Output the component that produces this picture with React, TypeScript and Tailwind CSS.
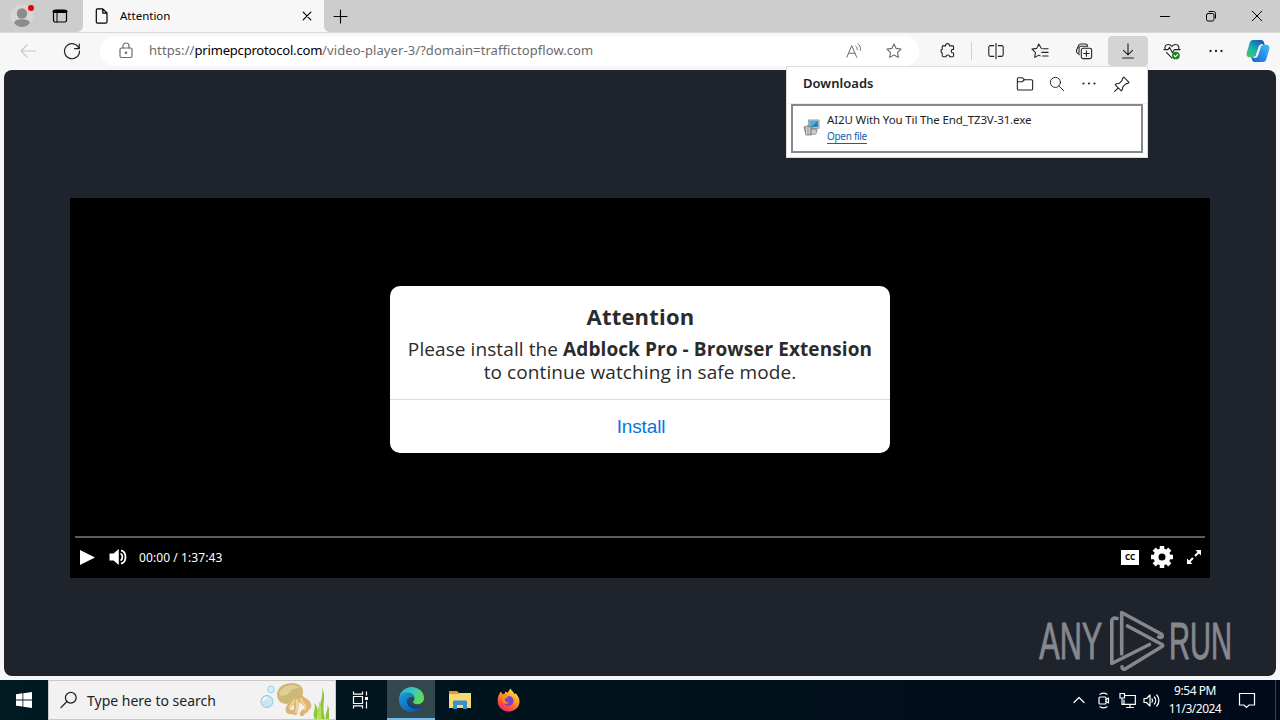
import React from 'react';

type IconProps = {
  children: React.ReactNode;
  box?: number;
  size?: number;
  className?: string;
};

function Icon({ children, box = 20, size = 20, className = '' }: IconProps) {
  return (
    <svg
      width={size}
      height={size}
      viewBox={`0 0 ${box} ${box}`}
      fill="none"
      stroke="currentColor"
      strokeWidth="1.2"
      strokeLinecap="round"
      strokeLinejoin="round"
      className={`shrink-0 ${className}`}
    >
      {children}
    </svg>
  );
}

const STAR = 'M10 2.2l2.4 4.9 5.4.8-3.9 3.8.9 5.4-4.8-2.6-4.8 2.6.9-5.4-3.9-3.8 5.4-.8z';

function TabBar() {
  return (
    <header className="flex h-8 shrink-0 bg-[#f7f7f7] text-black">
      <div className="flex w-[83px] items-center rounded-br-md bg-[#cdcdcd]">
        <div className="flex w-11 justify-center">
          <svg width="24" height="24" viewBox="0 0 24 24">
            <circle cx="12" cy="12" r="11.5" fill="#d8d6d4" />
            <circle cx="12" cy="9.5" r="5.2" fill="#8e8c8a" />
            <path d="M4 19c1-3.3 4.200-3.800 8-3.800s7 .5 8 3.800c-2 2.600-4.700 3.900-8 3.900S6 21.600 4 19z" fill="#8e8c8a" />
            <circle cx="21" cy="4" r="3" fill="#e3000f" />
          </svg>
        </div>
        <div className="flex w-8 justify-center">
          <Icon size={16} box={16}>
            <rect x="1.500" y="2" width="13" height="12" rx="1.800" />
            <path d="M2 3.600h12" strokeWidth="3" />
            <path d="M5 5v9" strokeWidth="1" />
          </Icon>
        </div>
      </div>
      <div className="flex w-[241px] items-center pl-[11px]">
        <Icon size={16} box={16}>
          <path d="M3.500.8h5.300l4.200 4.200v9c0 .8-.5 1.200-1.200 1.200H3.500c-.8 0-1.200-.5-1.200-1.200V2c0-.8.500-1.200 1.200-1.200zM8.800 1v4.100H13" />
        </Icon>
        <span className="ml-2.5 w-[182px] text-[11.5px]">Attention</span>
        <Icon size={10} box={10}>
          <path d="M1.200 1.200l7.600 7.600M8.800 1.200l-7.600 7.600" />
        </Icon>
      </div>
      <div className="flex flex-1 items-center rounded-bl-md bg-[#cdcdcd] pl-[9px]">
        <Icon size={15} box={15}>
          <path d="M7.500 1v13M1 7.500h13" strokeWidth="1.100" />
        </Icon>
        <div className="ml-auto flex">
          <div className="flex w-[46px] justify-center">
            <Icon size={12} box={12}><path d="M1.500 6.500h9" strokeWidth="1" /></Icon>
          </div>
          <div className="flex w-[46px] justify-center">
            <Icon size={12} box={12}>
              <rect x="1.500" y="3.500" width="7.500" height="7.500" rx="1.500" strokeWidth="1" />
              <path d="M4 1.500h4.500c1.300 0 2 .7 2 2V8" strokeWidth="1" />
            </Icon>
          </div>
          <div className="flex w-[46px] justify-center">
            <Icon size={12} box={12}><path d="M1.200 1.200l9.600 9.600M10.800 1.200l-9.600 9.600" strokeWidth="1" /></Icon>
          </div>
        </div>
      </div>
    </header>
  );
}

function Toolbar() {
  return (
    <div className="flex h-[38px] shrink-0 items-center border-t border-[#d8d8d8] bg-[#f7f7f7] pb-px pl-1.5 text-[#222]">
      <div className="flex w-11 justify-center text-[#c8c8c8]">
        <Icon><path d="M17.500 10H3M9 4l-6 6 6 6" /></Icon>
      </div>
      <div className="flex w-11 justify-center">
        <Icon>
          <path d="M17 7.500A7.500 7.500 0 1 0 17.500 10M17.300 3v4.700h-4.700" />
        </Icon>
      </div>
      <div className="ml-1.5 flex h-[30px] w-[819px] items-center rounded-full bg-white pl-4 text-[#6b6b6b]">
        <Icon>
          <rect x="4" y="7" width="12" height="9.500" rx="1.500" />
          <path d="M7 7V5c0-1.800 1.200-3 3-3s3 1.200 3 3v2" />
          <circle cx="10" cy="11.800" r=".7" fill="currentColor" />
        </Icon>
        <span className="ml-[13px] w-[696px] whitespace-nowrap text-[13px] tracking-[0.09px]">
          https://<span className="tracking-[-0.19px] text-black">primepcprotocol.com</span>/video-player-3/?domain=traffictopflow.com
        </span>
        <Icon size={18}>
          <path d="M2 17L7.500 4 13 17M4 12.500h7M12 4.500c1.300 1 1.800 2.500 1.500 4M14.500 2c2.300 1.800 3.200 4.500 2.500 7.300" strokeWidth="1.100" />
        </Icon>
        <Icon size={18} className="ml-[22px]"><path d={STAR} /></Icon>
      </div>
      <div className="ml-2.5 flex w-[38px] justify-center">
        <Icon size={18}>
          <path d="M7.300 4.300V4a2.200 2.200 0 0 1 4.400 0v.3h3.600c.5 0 .9.400.9.900v3h-.6a2 2 0 0 0 0 4h.6v3.200c0 .6-.4 1-.9 1h-3.500a2 2 0 0 0-4 0H4.600c-.6 0-1-.4-1-1v-3.200a2.100 2.100 0 0 1 0-4V5.200c0-.5.400-.9.900-.9z" />
        </Icon>
      </div>
      <div className="mx-1 h-[18px] w-px bg-[#d0d0d0]" />
      <div className="flex w-10 justify-center">
        <Icon size={18}>
          <path d="M10 1.500v17M7.500 4H3.800C2.700 4 2 4.700 2 5.800v8.400c0 1.100.7 1.800 1.800 1.800h3.700M12.500 4h3.700c1.100 0 1.800.7 1.800 1.800v8.400c0 1.100-.7 1.800-1.800 1.800h-3.700" />
        </Icon>
      </div>
      <div className="ml-0.5 flex w-11 justify-center">
        <Icon size={18}>
          <path d="M11.500 7.300L8.600 2.200 6.400 7.100l-5.300.8L5 11.700l-.9 5.400 4.700-2.500 1.500.8M13 7.500h6M12 11.500h7M13 15.500h6" />
        </Icon>
      </div>
      <div className="flex w-11 justify-center">
        <Icon size={18}>
          <rect x="7" y="7" width="11.500" height="11.500" rx="2" />
          <path d="M12.700 9.800v6M9.700 12.800h6M4.800 14l-2.500-2.200C1.500 11 1.400 10 1.800 9l2-4.800c.5-1.300 1.500-1.900 2.800-1.900h5c1.300 0 2.100.8 2.400 2M4.500 12V6.800c0-1.200.8-2 2-2H14" />
        </Icon>
      </div>
      <div className="ml-0.5 flex h-[30px] w-10 items-center justify-center rounded bg-[#d4d4d4]">
        <Icon size={18}><path d="M10 2v12M5 9.300l5 5 5-5M4 17.800h12" /></Icon>
      </div>
      <div className="ml-0.5 flex w-11 justify-center">
        <Icon size={18}>
          <path d="M2.500 8.500C1.300 5 3 2.700 5.700 2.700c1.700 0 3.200.9 4.100 2.400.9-1.500 2.400-2.400 4.200-2.400 2.700 0 4.500 2.500 3.400 5.600M1 8.500h4.500L7.300 6l3.200 6 2-3.500H19M3.800 11.500L10 17.800" />
          <circle cx="14.300" cy="15" r="4.300" fill="#198319" stroke="none" />
          <path d="M12.400 15l1.400 1.400 2.500-2.700" stroke="#fff" />
        </Icon>
      </div>
      <div className="flex w-11 justify-center">
        <Icon size={16} box={16}>
          <path d="M2.500 8h0M8 8h0M13.500 8h0" strokeWidth="2.300" />
        </Icon>
      </div>
      <div className="flex w-10 justify-center">
        <svg width="24" height="24" viewBox="0 0 24 24">
          <defs>
            <linearGradient id="cpA" x1="0" y1="1" x2=".8" y2="0">
              <stop offset="0" stopColor="#54c85b" />
              <stop offset=".45" stopColor="#1cb3ad" />
              <stop offset="1" stopColor="#1358bd" />
            </linearGradient>
            <linearGradient id="cpB" x1="1" y1="0" x2="0" y2="1">
              <stop offset="0" stopColor="#42c1f8" />
              <stop offset="1" stopColor="#175bd6" />
            </linearGradient>
          </defs>
          <path d="M7 1h8c2 0 2.600 1 3.100 2.700l.7 2.300h-2.500c-1.800 0-2.800.9-3.300 2.500l-2.600 8c-.4 1.200-1 1.800-2.200 1.800H4c-3 0-4-2-3.200-4.800l2.600-8.800C4.100 2.200 5 1 7 1z" fill="url(#cpA)" />
          <path d="M17 23H9c-2 0-2.600-1-3.100-2.700L5.200 18h2.500c1.800 0 2.800-.9 3.300-2.500l2.600-8c.4-1.200 1-1.800 2.200-1.800H20c3 0 4 2 3.200 4.800l-2.600 8.800C19.900 21.800 19 23 17 23z" fill="url(#cpB)" />
          <path d="M10.300 16.500l3-9.300c.4-1 1-1.400 2-1.400h1.500c-1.300 0-2 .6-2.400 1.800l-2.900 9.100c-.4 1.200-1.200 1.600-2.400 1.600H7.500c1.500 0 2.400-.6 2.800-1.800z" fill="#f7f7f7" stroke="#f7f7f7" strokeWidth="1" />
        </svg>
      </div>
    </div>
  );
}

function Downloads() {
  return (
    <div className="absolute left-[786px] top-[66px] flex h-[92px] w-[362px] flex-col border border-[#dedede] bg-white text-[#222]">
      <div className="flex h-[37px] shrink-0 items-center border-b border-[#eee] pb-[3px] pl-4">
        <span className="w-[206px] text-[13px] font-semibold tracking-[0.03px]">Downloads</span>
        <div className="flex w-8 justify-center">
          <Icon size={18}>
            <path d="M1.500 7.500V4.600c0-.9.600-1.500 1.500-1.500h4L9.500 5.300H17c.9 0 1.500.6 1.500 1.500v8.400c0 .9-.6 1.500-1.500 1.500H3c-.9 0-1.500-.6-1.500-1.500V7.500h5.300l2.700-2.200" />
          </Icon>
        </div>
        <div className="flex w-8 justify-center">
          <Icon size={16}>
            <circle cx="8" cy="8" r="6.300" /><path d="M12.700 12.700l5.800 5.800" />
          </Icon>
        </div>
        <div className="flex w-8 justify-center">
          <Icon size={16} box={16}><path d="M2.500 7.500h0M8 7.500h0M13.500 7.500h0" strokeWidth="2.200" /></Icon>
        </div>
        <div className="flex w-[34px] justify-center">
          <Icon size={18}>
            <path d="M12 2.300l5.800 5.800-1.200 1.200-2.700.8-3 3-.5 3.200-1.200 1.300-6.700-6.700 1.300-1.200 3.200-.5 3-3L10.800 3.500zM5.800 14.200L1.800 18.200" />
          </Icon>
        </div>
      </div>
      <div className="mx-1 flex h-[49px] items-center border-2 border-[#888] pb-0.5 pl-2.5">
        <svg width="17" height="17" viewBox="0 0 18 18" className="shrink-0">
          <rect x="6" y="1" width="11" height="9" fill="#b5c3cc" stroke="#6b7d8a" strokeWidth=".6" />
          <rect x="7.300" y="2.300" width="8.400" height="6" fill="#147cc4" />
          <path d="M7.300 2.300h8.400L9 8.300H7.300z" fill="#4fb0e6" />
          <path d="M8 10h6l2 2.500H8z" fill="#8a9197" />
          <path d="M1 8.500l4-1.500 5 1-1 9H3z" fill="#9ba39b" stroke="#5f665f" strokeWidth=".6" />
          <path d="M4 8v8.500M6.500 9v7" stroke="#e6eae4" />
          <circle cx="11.500" cy="13.500" r="3" fill="#c9cdd0" stroke="#777" strokeWidth=".6" />
        </svg>
        <div className="ml-[7px] flex flex-col items-start">
          <span className="whitespace-nowrap text-[11.5px] leading-[15px] tracking-[-0.13px]">AI2U With You Til The End_TZ3V-31.exe</span>
          <span className="mt-[3px] border-b border-[#0f62ad] text-[10px] leading-[13px] tracking-[-0.3px] text-[#0f62ad]">Open file</span>
        </div>
      </div>
    </div>
  );
}

function InstallDialog() {
  return (
    <div className="mt-[88px] flex h-[167px] w-[500px] flex-col rounded-[10px] bg-white text-center font-['Open_Sans',sans-serif] text-[#2b2b2b]">
      <div className="flex h-[114px] flex-col border-b border-[#dcdcdc] pt-4">
        <h1 className="pl-px text-[22px] font-bold leading-7 tracking-[0.2px]">Attention</h1>
        <p className="mt-2 whitespace-nowrap text-[19px] leading-[23px] tracking-[0.09px]">
          Please install the <b>Adblock Pro - Browser Extension</b>
          <br />
          to continue watching in safe mode.
        </p>
      </div>
      <button className="flex-1 pl-0.5 pt-px font-['Liberation_Sans',sans-serif] text-[19px] tracking-[-0.15px] text-[#0a74e0]">Install</button>
    </div>
  );
}

function Player() {
  return (
    <div className="mt-32 flex h-[380px] w-[1140px] flex-col items-center bg-black text-white">
      <InstallDialog />
      <div className="mt-auto h-0.5 w-[1130px] bg-[#5c5c5c]" />
      <div className="flex h-10 w-full items-center pb-0.5 pl-2.5 pr-2">
        <svg width="15" height="15" viewBox="0 0 15 15" fill="#fff"><path d="M0 0l15 7.500L0 15z" /></svg>
        <svg width="19" height="16" viewBox="0 0 18 16" className="ml-3.5">
          <path d="M0 4.500h4L9.300 0v16L4 11.500H0z" fill="#fff" />
          <path d="M11 4.500c2.500 1 2.500 6 0 7M11.500 1.300c6 1.500 6 12 0 13.400" fill="none" stroke="#fff" strokeWidth="1.800" />
        </svg>
        <span className="ml-[11px] pt-px text-[12px] tracking-[0.08px]">00:00 / 1:37:43</span>
        <span className="ml-auto flex h-[15px] w-[18px] items-center justify-center bg-white text-[8px] font-bold leading-none text-black">CC</span>
        <svg width="22" height="22" viewBox="0 0 22 22" className="ml-3">
          <g fill="none" stroke="#fff">
            <circle cx="11" cy="11" r="6" strokeWidth="5" />
            <path d="M11 0v4M11 18v4M0 11h4M18 11h4M3.200 3.200L6 6M16 16l2.800 2.800M3.200 18.800L6 16M16 6l2.800-2.800" strokeWidth="4.500" />
          </g>
        </svg>
        <svg width="16" height="16" viewBox="0 0 16 16" fill="#fff" className="ml-[13px]">
          <path d="M9.500 1H15v5.500zM1 9.500V15h5.500z" />
          <path d="M9 7l4-4M7 9l-4 4" stroke="#fff" strokeWidth="2" />
        </svg>
      </div>
    </div>
  );
}

function Watermark() {
  return (
    <svg
      width="216"
      height="72"
      viewBox="0 0 216 72"
      className="absolute left-[1036px] top-[606px] overflow-visible font-['Liberation_Sans',sans-serif]"
      fill="none"
      stroke="#85888d"
      strokeWidth="3.600"
      strokeLinecap="round"
      strokeLinejoin="round"
    >
      <g fill="#85888d" strokeWidth="1" fontSize="51">
        <text x="3.300" y="52.500" textLength="63" lengthAdjust="spacingAndGlyphs">ANY</text>
        <text x="133" y="52.500" textLength="63" lengthAdjust="spacingAndGlyphs">RUN</text>
      </g>
      <path d="M85.700 48V6.500l39.500 21.500c2.500 2 .5 4.500-2.500 3" />
      <path d="M91.500 20l34.500 18.500c1 .6 1 1.400 0 2L89.500 62.800c-2 1-3.500.2-3.500-2" />
      <path d="M81 12.500c-3.500-1-5.200 0-5.200 3V57.500L113.500 38.500" />
    </svg>
  );
}

function EdgeLogo() {
  return (
    <svg width="25" height="25" viewBox="0 0 24 24">
      <defs>
        <linearGradient id="edgeTop" x1="0" y1="0" x2="1" y2=".4">
          <stop offset="0" stopColor="#23a7de" />
          <stop offset=".5" stopColor="#36c6c3" />
          <stop offset="1" stopColor="#5fdc5b" />
        </linearGradient>
        <linearGradient id="edgeLow" x1="0" y1="0" x2="1" y2="1">
          <stop offset="0" stopColor="#1b9de2" />
          <stop offset="1" stopColor="#0c4d9c" />
        </linearGradient>
      </defs>
      <path d="M0 11.500C.6 4.700 5.700 0 12 0c7 0 12 5 12 10.500 0 4-3 6-6 6-2.800 0-4.600-1-4.600-2 0-.7 1.500-1.300 1.500-3.500C14.900 7.500 11.500 5.500 8 5.500c-4 0-7 2.500-8 6z" fill="url(#edgeTop)" />
      <path d="M0 11.500C1 7.500 4.300 5.700 8 5.700c4 0 6.700 2.300 6.800 5-.7-.8-1.700-1.200-3-1.200-2.200 0-3.800 2-3.800 4.300 0 4.200 4 6.700 8.300 6.700 2.300 0 4.200-.7 6-1.800C20.300 21.800 16.500 24 12 24 5 24-.4 18.500 0 11.500z" fill="url(#edgeLow)" />
      <path d="M8.800 11c-1 1-1.300 3-.6 5 1.400 3.800 6 5.500 10 4.700 1.800-.4 3.600-1.500 4.300-2.700-2 1-5.500 1.500-8.500.2C10.500 16.700 8.500 14 8.800 11z" fill="#0f4280" />
    </svg>
  );
}

function SearchArt() {
  return (
    <svg width="70" height="38" viewBox="0 0 70 38">
      <circle cx="8" cy="20.500" r="6" fill="#c9e8f2" stroke="#8fc7dc" />
      <circle cx="12" cy="8.500" r="3.300" fill="#d7eff6" stroke="#9bcfe0" />
      <path d="M4 20c.5-2 2-3.300 4-3.500" stroke="#fff" strokeWidth="1.500" fill="none" />
      <g fill="none" strokeLinecap="round">
        <path d="M35 19c-1 5-5 4-6 8s2 4 4 4M38 18c-1 6 0 9-2 14M41 17c1 6 8 5 7 10s-4 2-5 6M42 16c3 4 9 4 8 10" stroke="#dcb473" strokeWidth="4.500" />
        <path d="M35 19c-1 5-4 5-4 8M38 19c0 5 1 8-1 12M42 18c1 5 6 5 4 10" stroke="#f0d29b" strokeWidth="2.200" />
      </g>
      <path d="M18 14C18 6 25 2 33 2c7 0 12 4 11 10-.5 4-4 4-7 5-4 2-5 6-9 6-5 0-10-3-10-9z" fill="#cdb878" />
      <path d="M20 14c1-6 7-10 13-10 4 0 7 1.500 7 3-4 0-7 1-9 4s-8 5-11 3z" fill="#e6d69f" opacity=".75" />
      <path d="M56 38c-4-6 2-9-1-16 5 4 4 10 3 16zM62 38c-6-10 3-18 1-31 5 9-1 17 3 31zM67 38c-2-5 3-8 1-14 4 5 2 9 2 14z" fill="#8cc63f" />
      <path d="M59 38c-3-7 2-10 1-18 4 7 1 12 3 18z" fill="#b7dc58" />
    </svg>
  );
}

function Taskbar() {
  return (
    <footer className="flex h-10 shrink-0 items-center bg-linear-to-r from-[#001a22] via-[#00121c] to-[#000a1a] text-white">
      <div className="flex w-12 justify-center">
        <svg width="16" height="16" viewBox="0 0 16 16" fill="#fff">
          <path d="M0 2.200l6.500-.9v6.200H0zM7.300 1.200L16 0v7.500H7.300zM0 8.400h6.500v6.200L0 13.700zM7.300 8.400H16V16l-8.700-1.200z" />
        </svg>
      </div>
      <div className="flex h-10 w-72 items-center border border-[#c9c9c9] bg-[#f2f2f2] pl-[11px] text-[#222]">
        <Icon size={18}>
          <circle cx="12" cy="7.500" r="6" strokeWidth="1.400" /><path d="M7.700 11.700L1 18.500" strokeWidth="1.400" />
        </Icon>
        <span className="ml-[9px] w-[172px] whitespace-nowrap text-[14px]">Type here to search</span>
        <SearchArt />
      </div>
      <div className="flex w-[51px] justify-center pr-1">
        <Icon size={18} box={18}>
          <path d="M2.500 5.500h9v7h-9zM2.500 1v2.200h9V1M2.500 17v-2.200h9V17M15.500 1v3M15.500 11v6" strokeLinecap="square" strokeLinejoin="miter" />
          <path d="M14 6h3v3h-3z" fill="#fff" stroke="none" />
        </Icon>
      </div>
      <div className="flex h-10 w-12 items-center justify-center border-b-2 border-[#76b9ed] bg-[#33474e]">
        <EdgeLogo />
      </div>
      <div className="flex w-[49px] justify-center">
        <svg width="22" height="20" viewBox="0 0 22 20">
          <path d="M0 1h8l2 2h12v5H0z" fill="#e79a1c" />
          <path d="M0 4h9l2-1h11v15H0z" fill="#f8d775" />
          <path d="M4 19v-7c0-1 .6-1.500 1.500-1.500h11c.9 0 1.500.5 1.500 1.500v7h-4v-4H8v4z" fill="#3a8fc8" />
        </svg>
      </div>
      <div className="flex w-[49px] justify-center">
        <svg width="23" height="24" viewBox="0 0 24 24">
          <defs>
            <linearGradient id="fox" x1=".8" y1="0" x2=".2" y2="1">
              <stop offset="0" stopColor="#fff04f" />
              <stop offset=".4" stopColor="#ff9a20" />
              <stop offset=".75" stopColor="#ff4a3d" />
              <stop offset="1" stopColor="#e3208a" />
            </linearGradient>
          </defs>
          <path d="M2.500 5.500L4 3l2 3 2-.5L8.800 3 11 4.500 14 0c1 2.500 3.500 3.500 4.500 6l1-1c2.500 2.500 4 5.500 4 8.500C23.500 20 18 24 12 24S.7 19.500.7 13c0-3 .6-5.500 1.800-7.500z" fill="url(#fox)" />
          <circle cx="12" cy="13" r="5.300" fill="#7542d8" />
          <path d="M6 7c3-1 5 0 6 2-2 0-2 1.500-4 1.800 0 3 2 4 4.500 3.600-2 2.600-6 2-7-1C4.800 11 5 8.500 6 7z" fill="#ff8a1c" />
        </svg>
      </div>
      <div className="ml-auto flex w-6 justify-center">
        <Icon size={14} box={14}><path d="M2 9.500l5-5 5 5" /></Icon>
      </div>
      <div className="flex w-6 justify-center">
        <Icon size={17} box={17}>
          <rect x="4" y="5" width="7" height="7" rx="1" />
          <path d="M11 7.500l2.500-1.500v5L11 9.500M5 2.300c2.200-1.400 4.800-1.400 7 0M5 14.700c2.200 1.400 4.800 1.400 7 0" />
        </Icon>
      </div>
      <div className="flex w-6 justify-center">
        <Icon size={17} box={17}>
          <path d="M6 3.500h10.300v8.800H5V8M7.500 15.500h7M11 12.500v3M1 1.500h4.500v4.500H1zM3 6v6.300h2" strokeLinejoin="miter" />
        </Icon>
      </div>
      <div className="flex w-6 justify-center">
        <Icon size={17} box={17}>
          <path d="M1 6.500h2.500L7 3v11l-3.500-3.500H1zM9 7c.8.900.8 2.100 0 3M11.300 5c1.800 2 1.800 5 0 7M13.700 3c3 3.200 3 7.800 0 11" />
        </Icon>
      </div>
      <div className="flex w-16 flex-col items-center whitespace-nowrap text-[12px] leading-[18px]">
        <span className="tracking-[-0.45px]">9:54 PM</span>
        <span className="tracking-[-0.5px]">11/3/2024</span>
      </div>
      <div className="flex w-10 justify-center">
        <Icon size={18} box={18}>
          <path d="M1.500 2.500h15v11.500H11l-2.500 2.500L6 14H1.500z" strokeLinejoin="miter" />
        </Icon>
      </div>
      <div className="ml-2 mr-1 h-10 w-px bg-[#39424c]" />
    </footer>
  );
}

export default function App() {
  return (
    <div className="relative flex h-[720px] w-[1280px] flex-col overflow-hidden bg-[#f7f7f7] font-['Noto_Sans',sans-serif]">
      <TabBar />
      <Toolbar />
      <main className="mx-1 mb-1 flex min-h-0 flex-1 flex-col items-center rounded-lg bg-[#1f232c]">
        <Player />
      </main>
      <Taskbar />
      <Downloads />
      <Watermark />
    </div>
  );
}
